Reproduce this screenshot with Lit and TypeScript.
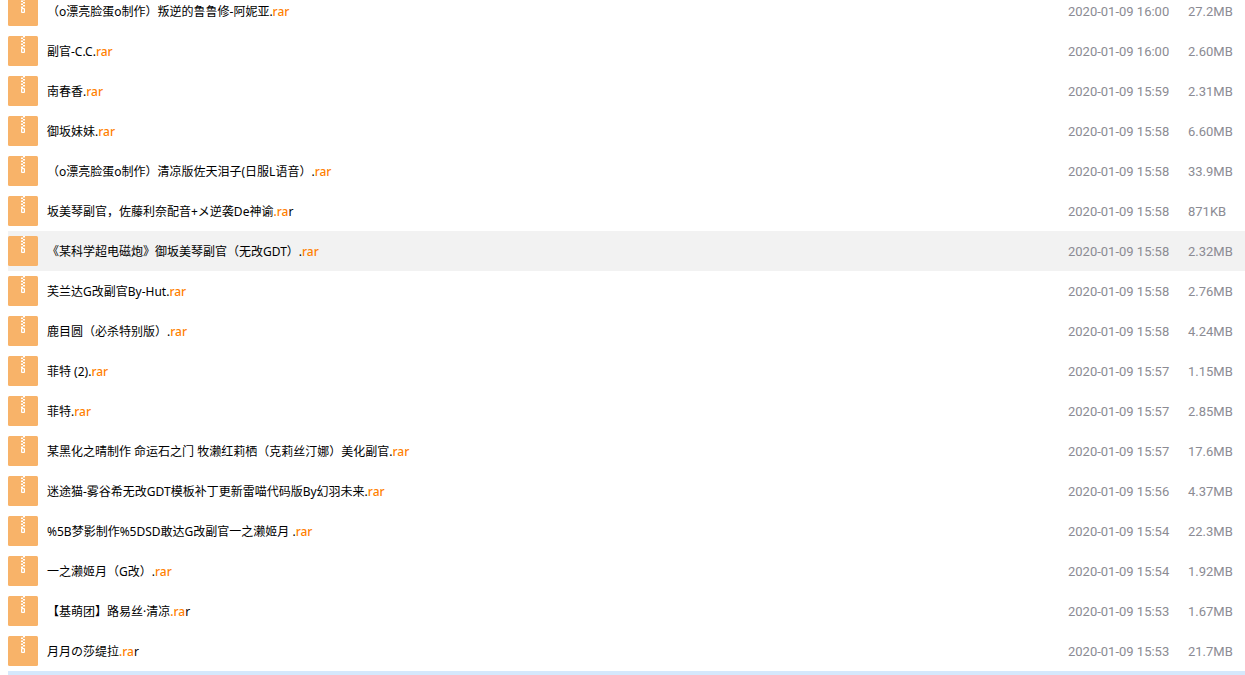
import { LitElement, html, css, svg } from "lit";
import { customElement, property } from "lit/decorators.js";
import { classMap } from "lit/directives/class-map.js";

interface FileEntry {
  name: string;
  mark: string;
  rest?: string;
  date: string;
  size: string;
  hovered?: boolean;
}

const FILES: FileEntry[] = [
  { name: "（o漂亮脸蛋o制作）叛逆的鲁鲁修-阿妮亚.", mark: "rar", date: "2020-01-09 16:00", size: "27.2MB" },
  { name: "副官-C.C.", mark: "rar", date: "2020-01-09 16:00", size: "2.60MB" },
  { name: "南春香.", mark: "rar", date: "2020-01-09 15:59", size: "2.31MB" },
  { name: "御坂妹妹.", mark: "rar", date: "2020-01-09 15:58", size: "6.60MB" },
  { name: "（o漂亮脸蛋o制作）清凉版佐天泪子(日服L语音）.", mark: "rar", date: "2020-01-09 15:58", size: "33.9MB" },
  { name: "坂美琴副官，佐藤利奈配音+メ逆袭De神谕", mark: ".ra", rest: "r", date: "2020-01-09 15:58", size: "871KB" },
  { name: "《某科学超电磁炮》御坂美琴副官（无改GDT）.", mark: "rar", date: "2020-01-09 15:58", size: "2.32MB", hovered: true },
  { name: "芙兰达G改副官By-Hut.", mark: "rar", date: "2020-01-09 15:58", size: "2.76MB" },
  { name: "鹿目圆（必杀特别版）.", mark: "rar", date: "2020-01-09 15:58", size: "4.24MB" },
  { name: "菲特 (2).", mark: "rar", date: "2020-01-09 15:57", size: "1.15MB" },
  { name: "菲特.", mark: "rar", date: "2020-01-09 15:57", size: "2.85MB" },
  { name: "某黑化之晴制作 命运石之门 牧濑红莉栖（克莉丝汀娜）美化副官.", mark: "rar", date: "2020-01-09 15:57", size: "17.6MB" },
  { name: "迷途猫-雾谷希无改GDT模板补丁更新雷喵代码版By幻羽未来.", mark: "rar", date: "2020-01-09 15:56", size: "4.37MB" },
  { name: "%5B梦影制作%5DSD敢达G改副官一之濑姬月 .", mark: "rar", date: "2020-01-09 15:54", size: "22.3MB" },
  { name: "一之濑姬月（G改）.", mark: "rar", date: "2020-01-09 15:54", size: "1.92MB" },
  { name: "【基萌团】路易丝·清凉", mark: ".ra", rest: "r", date: "2020-01-09 15:53", size: "1.67MB" },
  { name: "月月の莎缇拉", mark: ".ra", rest: "r", date: "2020-01-09 15:53", size: "21.7MB" },
];

@customElement("archive-icon")
class ArchiveIcon extends LitElement {
  static styles = css`
    :host { display: block; width: 30px; height: 30px; }
    .icon { display: block; width: 100%; height: 100%; }
  `;

  render() {
    const teeth = [0, 3, 6, 9];
    return html`
      <svg class="icon" viewBox="0 0 30 30" aria-hidden="true">
        <rect width="30" height="30" rx="1.5" fill="#f8b369" />
        ${teeth.map((y) => svg`
          <rect x="15" y=${y} width="2" height="1.5" fill="#fff" />
          <rect x="13" y=${y + 1.5} width="2" height="1.5" fill="#fff" />`)}
        <rect x="13.6" y="12.6" width="2.8" height="3.8" rx="0.5" fill="none" stroke="#fff" stroke-width="1.2" />
      </svg>
    `;
  }
}

@customElement("app-root")
class AppRoot extends LitElement {
  @property({ attribute: false }) files: FileEntry[] = FILES;

  static styles = css`
    :host {
      display: block;
      height: 100vh;
      overflow: hidden;
      background: #fff;
      color: #000;
      font: 12px/20px "Noto Sans", "Noto Sans CJK SC", sans-serif;
    }
    .scroll { margin: -9px 0 0 8px; }
    .files { width: 100%; border-collapse: collapse; table-layout: fixed; }
    .row { height: 40px; }
    .row.hovered { background: #f2f2f2; }
    .cell { padding: 0; text-align: left; font-weight: 400; white-space: nowrap; }
    .date, .size { padding-top: 2px; color: #8b8b93; font: 400 13px/20px Roboto, sans-serif; }
    .date { width: 120px; }
    .size { width: 57px; }
    .entry { display: flex; align-items: center; gap: 9px; }
    .link { padding-top: 2px; color: inherit; text-decoration: none; white-space: pre; }
    .mark { color: #ff7f00; font-weight: 500; }
    .selected { height: 4px; background: #d5e8fc; }
  `;

  render() {
    return html`
      <div class="scroll">
        <table class="files">
          <tbody>
            ${this.files.map((f) => html`
              <tr class=${classMap({ row: true, hovered: !!f.hovered })}>
                <th class="cell" scope="row">
                  <div class="entry">
                    <archive-icon></archive-icon>
                    <a class="link" href="#">${f.name}<span class="mark">${f.mark}</span>${f.rest ?? ""}</a>
                  </div>
                </th>
                <td class="cell date">${f.date}</td>
                <td class="cell size">${f.size}</td>
              </tr>
            `)}
          </tbody>
        </table>
        <div class="selected"></div>
      </div>
    `;
  }
}
